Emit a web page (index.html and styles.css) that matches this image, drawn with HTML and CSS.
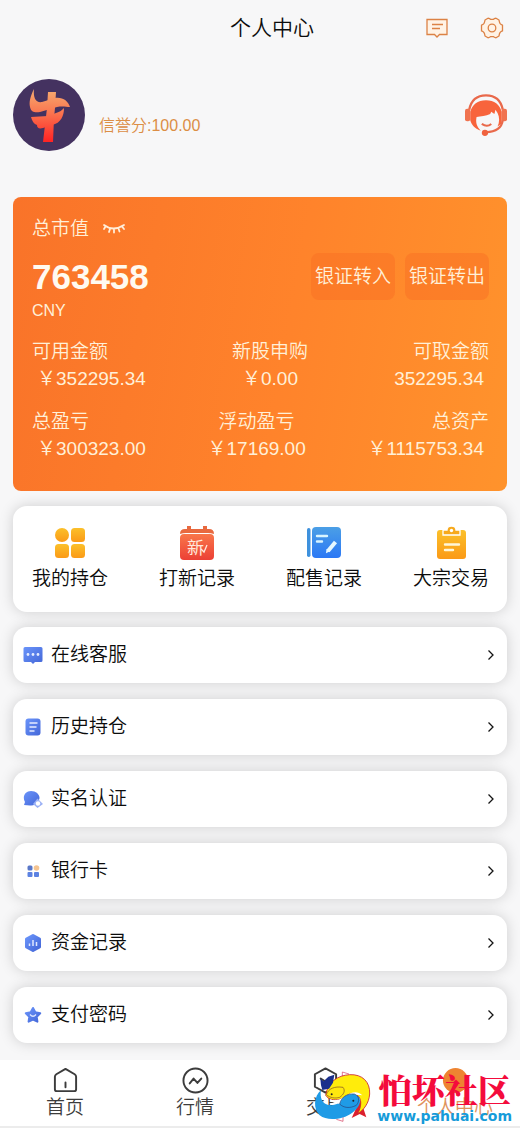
FILE: index.html
```html
<!DOCTYPE html>
<html lang="zh-CN">
<head>
<meta charset="utf-8">
<meta name="viewport" content="width=device-width, initial-scale=1">
<title>个人中心</title>
<link rel="stylesheet" href="styles.css">
</head>
<body>
<svg class="defs" width="0" height="0" aria-hidden="true">
  <defs>
    <linearGradient id="blue" x1="0" y1="0" x2="1" y2="1"><stop offset="0" stop-color="#6a94fa"/><stop offset="1" stop-color="#4467d8"/></linearGradient>
    <linearGradient id="amber" x1="0" y1="0" x2="0" y2="1"><stop offset="0" stop-color="#fbc02a"/><stop offset="1" stop-color="#fb9a17"/></linearGradient>
    <linearGradient id="red" x1="0" y1="0" x2="0" y2="1"><stop offset="0" stop-color="#f9764a"/><stop offset="1" stop-color="#ec4035"/></linearGradient>
    <linearGradient id="sky" x1="0" y1="0" x2="0" y2="1"><stop offset="0" stop-color="#4b9fe6"/><stop offset="1" stop-color="#2b78f5"/></linearGradient>
    <linearGradient id="bull" gradientUnits="userSpaceOnUse" x1="0" y1="10" x2="0" y2="62"><stop offset="0" stop-color="#f6ad70"/><stop offset=".45" stop-color="#fa7650"/><stop offset="1" stop-color="#ff2525"/></linearGradient>
  </defs>
</svg>
<header class="topbar">
  <h1 class="title">个人中心</h1>
  <div class="actions">
    <button class="icon-btn" aria-label="消息"><svg width="24" height="24" viewBox="0 0 24 24" fill="#fff3e6" stroke="#dc8245" stroke-width="1.3"><path d="M2 3.500h20v15h-7.500L12 21l-2.500-2.500H2z"/><path d="M7 8.500h11M7 12.500h8"/></svg></button>
    <button class="icon-btn" aria-label="设置"><svg width="24" height="24" viewBox="0 0 24 24" fill="#fff3e6" stroke="#dc8245" stroke-width="1.3"><path d="M8 2.200q1.800.3 2.800 1.200h2.400Q14.200 2.500 16 2.200l3 1.800q.3 2.200 1 3.300 1 1.300 2.500 1.800v5.800q-1.500.5-2.500 1.800-.7 1.100-1 3.300l-3 1.800q-1.800-.3-2.800-1.200h-2.400Q9.800 21.500 8 21.800L5 20q-.3-2.200-1-3.300-1-1.300-2.500-1.800V9.100Q3 8.600 4 7.300 4.700 6.200 5 4z" stroke-linejoin="round"/><circle cx="12" cy="12" r="3.800"/></svg></button>
  </div>
</header>

<main class="page">
  <section class="profile">
    <svg class="avatar" viewBox="0 0 72 72" role="img" aria-label="头像"><circle cx="36" cy="36" r="36" fill="#443260"/><g fill="url(#bull)"><path d="M21 10c-4 8-5 13-4 18 1 5 5 6 10 5l17-5c6-1 9 0 13 0-2-6-7-10-15-9l-13 4c-6 1-9-4-8-13z"/><path d="M35 13h8l-1 16-1 10-1 24H30l2-17 2-17z"/><path d="M18 38l17-1 8-3c4-1 6-3 8-5 0 8-3 15-12 17l-9 3c-4 1-6 0-6-3-3-1-5-4-6-8z"/></g></svg>
    <p class="credit">信誉分:100.00</p>
    <button class="icon-btn support" aria-label="客服"><svg width="42" height="42" viewBox="0 0 40 40"><path d="M4 15C6 5 12 1.300 20 1.300S34 5 36 15" fill="none" stroke="#e9694b" stroke-width="2.200"/><path d="M5 25V17C7 10 12 6 20 6s13 4 15 11v11l-4 3c2-4 2-9 0-13l-2-3-1 4-3-2-1 2c-4 2-9 2-13 3-1 5 0 9 4 13C9 33 6 29 5 25z" fill="#f8643c"/><rect y="14" width="5" height="12" rx="2" fill="#f07350"/><rect x="35" y="14" width="5" height="12" rx="2" fill="#f07350"/><path d="M16 28.500q5 3.500 9 0M36 25c-1 7-7 11-16 11.500" fill="none" stroke="#e9694b" stroke-width="2"/><circle cx="19" cy="37" r="3" fill="#f0623f"/></svg></button>
  </section>

  <section class="balance">
    <div class="balance-head"><span>总市值</span><button class="icon-btn" aria-label="隐藏金额"><svg width="24" height="12" viewBox="0 0 24 12" fill="none" stroke="#ffeeda" stroke-width="1.800" stroke-linecap="round"><path d="M2 2q9 7 20 0M3.500 3.500L2 6M8 6L7 9M12 6.500V9.500M16.500 5.500l1 3M20 3.500L22 6"/></svg></button></div>
    <div class="balance-main">
      <strong class="amount">763458</strong>
      <div class="transfers"><button class="transfer">银证转入</button><button class="transfer">银证转出</button></div>
    </div>
    <div class="currency">CNY</div>
    <dl class="stats">
      <div class="stat"><dt>可用金额</dt><dd>￥352295.34</dd></div>
      <div class="stat mid"><dt>新股申购</dt><dd>￥0.00</dd></div>
      <div class="stat end"><dt>可取金额</dt><dd>352295.34</dd></div>
    </dl>
    <dl class="stats">
      <div class="stat"><dt>总盈亏</dt><dd>￥300323.00</dd></div>
      <div class="stat mid"><dt>浮动盈亏</dt><dd>￥17169.00</dd></div>
      <div class="stat end"><dt>总资产</dt><dd>￥1115753.34</dd></div>
    </dl>
  </section>

  <nav class="card shortcuts" aria-label="快捷入口">
    <a class="shortcut" href="#"><svg width="36" height="36" viewBox="0 0 36 36" fill="url(#amber)"><circle cx="10" cy="10" r="7"/><rect x="19" y="3" width="14" height="14" rx="3.500"/><rect x="3" y="19" width="14" height="14" rx="3.500"/><rect x="19" y="19" width="14" height="14" rx="3.500"/></svg>我的持仓</a>
    <a class="shortcut" href="#"><svg width="36" height="36" viewBox="0 0 36 36"><path d="M1 9q0-5 5-5h2V1h4v3h12V1h4v3h2q5 0 5 5-3-1-6-1H7Q4 8 1 9z" fill="#e8693f"/><rect x="1" y="9" width="34" height="26" rx="4" fill="url(#red)"/><text class="badge-text" x="8" y="29">新</text><path d="M22 24l3 3 3-7" fill="none" stroke="#ffe8dc" stroke-width="1.300"/></svg>打新记录</a>
    <a class="shortcut" href="#"><svg width="36" height="36" viewBox="0 0 36 36"><rect x="1" y="3" width="3.500" height="29" rx="1.700" fill="#3e91dd"/><rect x="6" y="2" width="29" height="31" rx="4" fill="url(#sky)"/><path d="M11 11h10M11 16.500h5" stroke="#d9f5ff" stroke-width="2.400" stroke-linecap="round"/><path d="M29.500 17L22 26" stroke="#e6f8ff" stroke-width="4"/><path d="M20.500 24l3 2.500-3.500 1.700z" fill="#e6f8ff"/></svg>配售记录</a>
    <a class="shortcut" href="#"><svg width="36" height="36" viewBox="0 0 36 36"><rect x="4" y="5" width="29" height="29" rx="3" fill="url(#amber)"/><path d="M10 10V5h4q0-4 4.500-4T23 5h4v5z" fill="#f7a91c" stroke="#fff" stroke-width="1.300"/><circle cx="18.500" cy="5.500" r="1.700" fill="#fff"/><path d="M12 19.500h14M12 25h8" stroke="#fff6d9" stroke-width="2.400" stroke-linecap="round"/></svg>大宗交易</a>
  </nav>

  <a class="card row" href="#"><svg class="row-icon" viewBox="0 0 20 20"><path d="M2 2h16q1.500 0 1.500 1.500v12q0 1.500-1.500 1.500h-6l-2 2-2-2H2Q.5 17 .5 15.500v-12Q.5 2 2 2z" fill="url(#blue)"/><g fill="#e5ecff"><circle cx="5" cy="9.500" r="1.400"/><circle cx="10" cy="9.500" r="1.400"/><circle cx="15" cy="9.500" r="1.400"/></g></svg><span class="row-text">在线客服</span><svg class="chevron" viewBox="0 0 8 12"><path d="M1.500 1.500L6 6l-4.500 4.500"/></svg></a>
  <a class="card row" href="#"><svg class="row-icon" viewBox="0 0 20 20"><rect x="2.500" y="1.500" width="15" height="17" rx="3" fill="url(#blue)"/><path d="M6.500 6h8M6.500 10h7M6.500 14h5" stroke="#e5ecff" stroke-width="1.300"/></svg><span class="row-text">历史持仓</span><svg class="chevron" viewBox="0 0 8 12"><path d="M1.500 1.500L6 6l-4.500 4.500"/></svg></a>
  <a class="card row" href="#"><svg class="row-icon" viewBox="0 0 20 20"><path d="M1 16l1-3C-1 8 2 2 8 2s10 5 8 9l-4 4q-2 2-5 1.500z" fill="url(#blue)"/><path d="M14.500 9.500l5.500 5.500-5.500 4-4.500-4z" fill="#9bb1f5"/><circle cx="15" cy="14.500" r="2.200" fill="#fff"/></svg><span class="row-text">实名认证</span><svg class="chevron" viewBox="0 0 8 12"><path d="M1.500 1.500L6 6l-4.500 4.500"/></svg></a>
  <a class="card row" href="#"><svg class="row-icon" viewBox="0 0 20 20"><rect x="4.500" y="4.500" width="5" height="5" rx="1.500" fill="#5977c8"/><circle cx="13.500" cy="7" r="2.800" fill="#f4c491"/><rect x="4.500" y="11" width="5" height="5" rx="1" fill="#5c82e2"/><rect x="11" y="11" width="5" height="5" rx="1" fill="#5c82e2"/></svg><span class="row-text">银行卡</span><svg class="chevron" viewBox="0 0 8 12"><path d="M1.500 1.500L6 6l-4.500 4.500"/></svg></a>
  <a class="card row" href="#"><svg class="row-icon" viewBox="0 0 20 20"><path d="M10 2.500l6.500 3.600v7.800L10 17.500l-6.500-3.600V6.100z" fill="url(#blue)" stroke="url(#blue)" stroke-width="3" stroke-linejoin="round"/><path d="M6.500 13v-2.500M10 13V7M13.500 13V9" stroke="#dfe8ff" stroke-width="1.500"/></svg><span class="row-text">资金记录</span><svg class="chevron" viewBox="0 0 8 12"><path d="M1.500 1.500L6 6l-4.500 4.500"/></svg></a>
  <a class="card row" href="#"><svg class="row-icon" viewBox="0 0 20 20"><path d="M10 3l2.300 4.300 4.900.9-3.500 3.500.7 5-4.400-2-4.400 2 .7-5-3.500-3.500 4.900-.9z" fill="url(#blue)" stroke="url(#blue)" stroke-width="2" stroke-linejoin="round"/><path d="M7 9.500q3 3.500 6 0" fill="none" stroke="#dfe8ff" stroke-width="1.300"/></svg><span class="row-text">支付密码</span><svg class="chevron" viewBox="0 0 8 12"><path d="M1.500 1.500L6 6l-4.500 4.500"/></svg></a>
</main>

<footer class="footer">
  <nav class="tabs" aria-label="主导航">
    <a class="tab" href="#"><svg viewBox="0 0 28 28"><path d="M14 2l9.500 5.500q1.500 1 1.500 2.500v13q0 2-2 2H5q-2 0-2-2V10q0-1.500 1.500-2.500zM14 16v5"/></svg>首页</a>
    <a class="tab" href="#"><svg viewBox="0 0 28 28"><circle cx="14" cy="14" r="12.500"/><path d="M8 17l4-5 4 4.500 4-4.500"/></svg>行情</a>
    <a class="tab" href="#"><svg viewBox="0 0 28 28"><path d="M14 1.500l11 6v13l-11 6-11-6v-13zM9 12l5 3 5-3M14 15v6"/></svg>交易</a>
    <a class="tab active" href="#"><svg viewBox="0 0 28 28"><circle cx="14" cy="14" r="13"/></svg>个人中心</a>
  </nav>
  <div class="watermark">
    <svg class="fish" viewBox="0 0 240 198"><path d="M150 42l-20-6v14M112 178l20 6v-14" fill="none" stroke="#d43a5c" stroke-width="2"/><path d="M186 122l8 26 8 24-20-10-24 12 10-22 8-20z" fill="#dc1f2d"/><path d="M80 106C86 66 116 46 152 44c38-2 62 22 60 58-2 28-18 48-36 60 12-24 14-48-4-58-20-12-30 8-50 14-18 4-34 0-42-12z" fill="#ffec0b" stroke="#c8202c" stroke-width="2.500"/><path d="M64 56l10 8 14-14 18-6-4 24-12 18-20 4-4-14z" fill="#1a2f8c"/><path d="M66 90C44 110 42 146 62 166c22 18 68 14 98-8 20-14 28-34 20-46-12-14-36-8-52 8-12 14-26 18-42 14-16-4-24-20-20-44z" fill="#1f9be6"/><path d="M92 118c28 10 44-10 62-18 14-6 26-4 36 6-14-2-26-2-40 6-12 8-12 18-26 20-14 0-26-4-32-14z" fill="#fff"/><path d="M82 104c6-18 24-26 50-22 8 10 2 22-10 30-14 4-28 2-40-8z" fill="#ffe80f" stroke="#7c4a28" stroke-width="2"/><path d="M122 132c4-20 22-32 44-30 16 6 16 22 6 34-20 10-38 8-50-4z" fill="#1f9be6" stroke="#27417a" stroke-width="2"/><circle cx="98" cy="103" r="3" fill="#222"/><circle cx="163" cy="122" r="3" fill="#222"/></svg>
    <div class="mark-text"><span class="mark-name">怕坏社区</span><span class="mark-url">www.pahuai.com</span></div>
  </div>
</footer>
</body>
</html>
```
FILE: styles.css
```css
* { box-sizing: border-box; }
body {
  margin: 0;
  background: #f7f7f8;
  color: #0c0c0c;
  font: 350 19px/28px "Liberation Sans", "Noto Sans CJK SC", sans-serif;
}
h1, p, dl, dd { margin: 0; }
a { color: inherit; text-decoration: none; }
button { font: inherit; color: inherit; border: 0; padding: 0; background: none; }
svg { display: block; flex: none; }
.defs { position: absolute; }

.topbar {
  display: grid;
  grid-template-columns: 1fr auto 1fr;
  align-items: center;
  height: 56px;
  padding: 0 16px;
}
.title { grid-column: 2; font-size: 21px; font-weight: 350; padding-left: 24px; }
.actions { display: flex; justify-content: flex-end; gap: 31px; }

.page { padding: 0 13px; display: flex; flex-direction: column; gap: 16px; }
.profile { display: flex; align-items: center; padding: 23px 0 30px; }
.avatar { width: 72px; height: 72px; }
.credit { margin: 22px auto 0 14px; font-size: 16px; color: #dc8e45; }

.balance {
  padding: 18px 18px 29px 19px;
  border-radius: 8px;
  background: linear-gradient(100deg, #f97329, #ff832b 55%, #ff932c);
  color: #fff0d8;
}
.balance-head { display: flex; align-items: center; gap: 13px; }
.balance-main { display: flex; justify-content: space-between; align-items: center; margin-top: 10px; }
.amount { font-size: 35px; line-height: 40px; font-weight: 700; color: #fffaf0; }
.transfers { display: flex; gap: 10px; }
.transfer { padding: 10px 4px; line-height: 27px; border-radius: 8px; background: rgba(249, 112, 36, .5); }
.currency { font-size: 16px; line-height: 22px; }
.stats { display: flex; justify-content: space-between; line-height: 27px; margin-top: 16px; }
.stat dd { padding: 0 5px; }
.mid { text-align: center; }
.end { text-align: right; }

.card { background: #fff; border-radius: 14px; box-shadow: 0 0 14px rgba(0, 0, 0, .17); }
.shortcuts { display: flex; justify-content: space-between; padding: 19px 18px 19px 19px; margin: -1px 0; }
.shortcut { display: flex; flex-direction: column; align-items: center; gap: 4px; }
.badge-text { font: 400 17px "Noto Sans CJK SC", sans-serif; fill: #ffe8dc; }
.row { display: flex; align-items: center; gap: 8px; padding: 14px 12px 14px 10px; }
.row-icon { width: 20px; height: 20px; }
.row-text { flex: 1; }
.chevron { width: 8px; height: 12px; fill: none; stroke: #151515; stroke-width: 1.3; }

.footer { position: relative; margin-top: 17px; border-bottom: 2px solid #ececec; background: #fff; }
.tabs { display: grid; grid-template-columns: repeat(4, 1fr); }
.tab { display: flex; flex-direction: column; align-items: center; padding: 7px 0 4px; color: #3c3c3c; }
.tab svg { width: 27px; height: 27px; fill: none; stroke: #3c3c3c; stroke-width: 2; stroke-linecap: round; stroke-linejoin: round; }
.tab.active { color: #e0935c; }
.tab.active svg { fill: #ee8431; stroke: none; }

.watermark { position: absolute; right: 8px; bottom: 0; display: flex; align-items: flex-end; pointer-events: none; }
.fish { width: 80px; height: 66px; margin-right: -2px; }
.mark-text { display: flex; flex-direction: column; align-items: center; }
.mark-name { font: 900 33px/34px "Noto Serif CJK SC", "Noto Sans CJK SC", serif; color: #f40b3c; }
.mark-url { font: 700 14px/20px "DejaVu Sans", sans-serif; color: #169bd9; }
```
